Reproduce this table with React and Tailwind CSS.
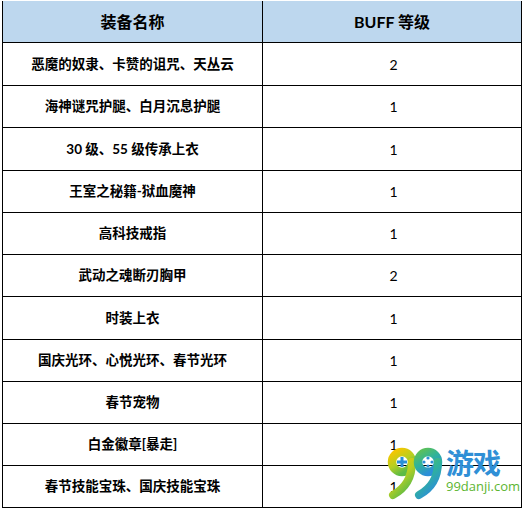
import React from "react";

const rows = [
  ["恶魔的奴隶、卡赞的诅咒、天丛云", "2", "h-[43px]"],
  ["海神谜咒护腿、白月沉息护腿", "1", "h-[42px]"],
  ["30 级、55 级传承上衣", "1", "h-[43px]"],
  ["王室之秘籍-狱血魔神", "1", "h-[42px]"],
  ["高科技戒指", "1", "h-[42px]"],
  ["武动之魂断刃胸甲", "2", "h-[42px]"],
  ["时装上衣", "1", "h-[43px]"],
  ["国庆光环、心悦光环、春节光环", "1", "h-[42px]"],
  ["春节宠物", "1", "h-[42px]"],
  ["白金徽章[暴走]", "1", "h-[42px]"],
  ["春节技能宝珠、国庆技能宝珠", "1", "h-[42px]"],
];

function Logo() {
  return (
    <div className="absolute left-[385px] top-[444px] w-[132px] h-[56px] pointer-events-none flex items-start">
      <svg width="60" height="56" viewBox="0 0 60 56" className="shrink-0">
        <defs>
          <linearGradient id="g1" x1="0" y1="0" x2="0.6" y2="1">
            <stop offset="0" stopColor="#f7c600" />
            <stop offset="0.55" stopColor="#b6cf22" />
            <stop offset="1" stopColor="#5dbb46" />
          </linearGradient>
          <linearGradient id="g2" x1="0" y1="0" x2="0.6" y2="1">
            <stop offset="0" stopColor="#5cc05a" />
            <stop offset="0.5" stopColor="#2fb39a" />
            <stop offset="1" stopColor="#2c8fd8" />
          </linearGradient>
        </defs>
        <circle cx="17" cy="18" r="10" fill="none" stroke="url(#g1)" strokeWidth="8.5" />
        <path d="M27 18 C27 33 21 44 8 51" fill="none" stroke="url(#g1)" strokeWidth="8" strokeLinecap="round" />
        <rect x="12" y="16.5" width="10" height="3" fill="#2a8fd8" />
        <rect x="15.5" y="13" width="3" height="10" fill="#2a8fd8" />
        <circle cx="43" cy="18" r="10" fill="none" stroke="url(#g2)" strokeWidth="8.5" />
        <path d="M53 18 C53 33 47 44 34 51" fill="none" stroke="url(#g2)" strokeWidth="8" strokeLinecap="round" />
        <circle cx="43" cy="14" r="1.6" fill="#2a8fd8" />
        <circle cx="39" cy="18" r="1.6" fill="#2a8fd8" />
        <circle cx="47" cy="18" r="1.6" fill="#2a8fd8" />
        <circle cx="43" cy="22" r="1.6" fill="#2a8fd8" />
      </svg>
      <div className="flex flex-col items-start ml-[1px] pt-[4px]">
        <div className="text-[28px] leading-[28px] font-bold text-[#2f8fd6] tracking-[-1px] [font-family:'Noto_Sans_CJK_SC',sans-serif]">
          游戏
        </div>
        <div className="mt-[3px] text-[13px] leading-[14px] text-[#5cb531] [font-family:'Open_Sans',sans-serif]">
          99danji.com
        </div>
      </div>
    </div>
  );
}

export default function App() {
  return (
    <div className="relative w-[526px] h-[510px] bg-white pl-[2px] pt-[1px] [font-family:Lato,'Noto_Sans_CJK_SC',sans-serif] text-black">
      <div className="w-[520px] border-l border-r border-black">
        <div className="grid grid-cols-[260px_1fr] h-[42px] bg-[#bdd7ee] border-b border-black">
          <div className="flex items-center justify-center border-r border-black text-[16px] font-bold">
            装备名称
          </div>
          <div className="flex items-center justify-center text-[16px] font-bold">
            BUFF 等级
          </div>
        </div>
        {rows.map(([name, lvl, h], i) => (
          <div key={i} className={`grid grid-cols-[260px_1fr] ${h} border-b border-black`}>
            <div className="flex items-center justify-center border-r border-black text-[13.5px] font-bold">
              {name}
            </div>
            <div className="flex items-center justify-center text-[14px] pl-[3px]">
              {lvl}
            </div>
          </div>
        ))}
      </div>
      <Logo />
    </div>
  );
}
